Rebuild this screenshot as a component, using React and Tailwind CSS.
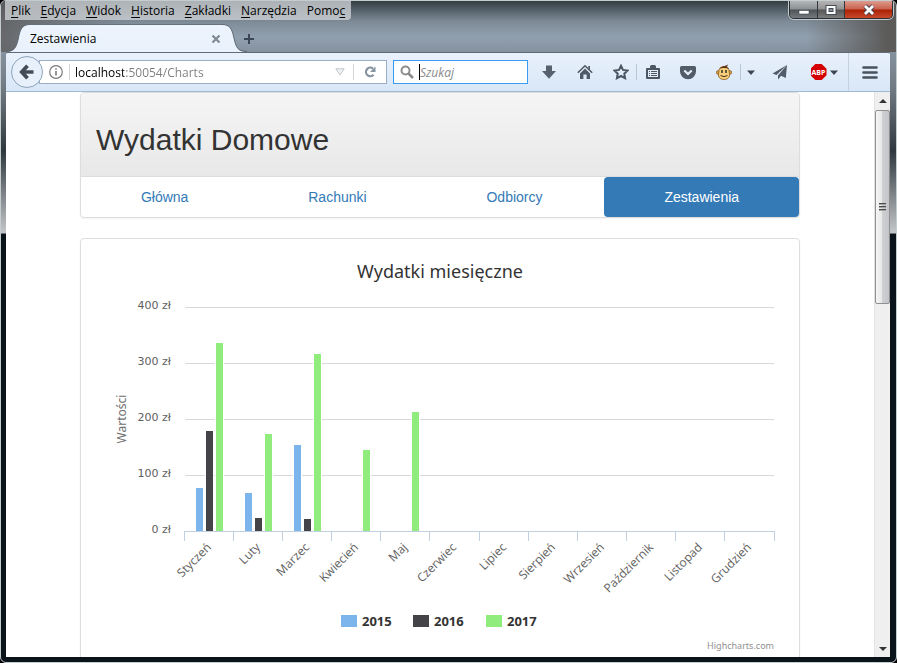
import React from "react";

const menus = [
  ["", "P", "lik"],
  ["", "E", "dycja"],
  ["", "W", "idok"],
  ["", "H", "istoria"],
  ["", "Z", "akładki"],
  ["", "N", "arzędzia"],
  ["Pomo", "c", ""],
];

const months = [
  "Styczeń", "Luty", "Marzec", "Kwiecień", "Maj", "Czerwiec",
  "Lipiec", "Sierpień", "Wrzesień", "Październik", "Listopad", "Grudzień",
];

const series = [
  { name: "2015", color: "#7cb5ec", offset: 11, values: [77, 68, 154], legendX: 245 },
  { name: "2016", color: "#434348", offset: 21, values: [179, 23, 21], legendX: 317 },
  { name: "2017", color: "#90ed7d", offset: 31, values: [336, 173, 316, 145, 213], legendX: 390 },
];

const PLOT = { left: 88, right: 678, bottom: 277, unit: 0.56 };
const tickX = (i) => Math.floor(PLOT.left + (i * (PLOT.right - PLOT.left)) / 12) + 0.5;

function WindowControls() {
  return (
    <div className="mr-[-3px] flex h-[18px] overflow-hidden rounded-b-[5px] border border-t-0 border-[#2b3035] shadow-[0_0_0_1px_#c3c9cd]">
      <button aria-label="Minimalizuj" className="flex w-7 items-center justify-center border-r border-[#33383c] bg-[linear-gradient(#b4b8ba,#8b9092_48%,#4d5356_52%,#747b80)]">
        <svg width="12" height="12"><rect x="1" y="6.500" width="10" height="3.500" fill="#fff" stroke="#444b55" strokeWidth=".6" /></svg>
      </button>
      <button aria-label="Maksymalizuj" className="flex w-[27px] items-center justify-center border-r border-[#33383c] bg-[linear-gradient(#b4b4b4,#929292_48%,#555_52%,#7d7d7d)]">
        <svg width="12" height="12"><rect x="1" y="1.500" width="10" height="9" fill="#fff" stroke="#444b55" strokeWidth="1" /><rect x="4" y="4.500" width="4" height="3" fill="#8b8f96" stroke="#444b55" strokeWidth="1" /></svg>
      </button>
      <button aria-label="Zamknij" className="flex w-[47px] items-center justify-center bg-[linear-gradient(#dd9b8f,#c9604b_48%,#ab2004_52%,#c8492a)]">
        <svg width="14" height="12" fill="none"><path d="M3 2 11 10M11 2 3 10" stroke="#4a4350" strokeWidth="4.600" /><path d="M3 2 11 10M11 2 3 10" stroke="#fff" strokeWidth="2.800" /></svg>
      </button>
    </div>
  );
}

function TitleBar() {
  return (
    <header className="ml-[-5px] mr-[-6px] bg-[linear-gradient(to_right,rgba(95,95,95,.85),rgba(110,118,126,0)_14%,rgba(110,118,126,0)_90%,rgba(90,88,86,.95)_99%)] pl-[5px] pr-[6px]">
      <div className="flex h-[19px] items-start justify-between">
        <nav className="-ml-px flex h-[19px] items-center gap-2.5 rounded-br-[4px] bg-[#ccd0d3]/80 px-1.5 text-xs text-black [text-shadow:0_0_5px_#fff,0_0_5px_#fff]">
          {menus.map(([a, key, b]) => (
            <button key={key} className="leading-4">
              {a}<span className="underline underline-offset-2">{key}</span>{b}
            </button>
          ))}
        </nav>
        <WindowControls />
      </div>
      <div className="flex h-8 items-end">
        <div className="flex h-7 items-stretch">
          <svg width="24" height="28" className="shrink-0">
            <defs><linearGradient id="tab" x1="0" y1="0" x2="0" y2="1"><stop offset="0" stopColor="#edf4fd" /><stop offset="1" stopColor="#e9f1fc" /></linearGradient></defs>
            <path d="M0 28C8 28 10 24 12 16C14 5 16 .5 24 .5V28Z" fill="url(#tab)" />
            <path d="M0 27.500C8 27 10 24 12 16C14 5 16 .5 24 .5" fill="none" stroke="#5d6872" />
          </svg>
          <div className="flex w-48 items-center justify-between border-t border-[#66727e] bg-[linear-gradient(#edf4fd,#e9f1fc)] text-xs text-black">
            <span>Zestawienia</span>
            <button aria-label="Zamknij kartę" className="mr-px">
              <svg width="10" height="10" fill="none" stroke="#7e8a96" strokeWidth="2.200"><path d="M1.500 1.500 8.500 8.500M8.500 1.500 1.500 8.500" /></svg>
            </button>
          </div>
          <svg width="25" height="28" className="shrink-0">
            <path d="M25 28C16 28 14 24 12 14C10 5 8 .5 0 .5V28Z" fill="url(#tab)" />
            <path d="M25 27.500C16 27 14 24 12 14C10 5 8 .5 0 .5" fill="none" stroke="#5d6872" />
          </svg>
        </div>
        <button aria-label="Nowa karta" className="-ml-1 mb-[7px]">
          <svg width="12" height="12" stroke="#3b4754" strokeWidth="2"><path d="M6 1V11M1 6H11" /></svg>
        </button>
      </div>
    </header>
  );
}

function Caret() {
  return <svg width="8" height="5" className="shrink-0"><path d="M0 .5H8L4 5Z" fill="#3c4651" /></svg>;
}

function Toolbar() {
  return (
    <div className="flex h-10 shrink-0 items-center rounded-t-[2px] border-b border-t border-b-[#a3b9d3] border-t-[#5f6b77] bg-[linear-gradient(#e9f1fc,#d8e7f7)] pl-[5px]">
      <button aria-label="Wstecz" className="z-10 flex size-8 shrink-0 items-center justify-center rounded-full border border-[#8fa3ba] bg-[#e7f0fb]">
        <svg width="16" height="16" fill="none" stroke="#434d58"><path d="M8.500 1.800 2.800 8 8.500 14.200" strokeWidth="3.800" /><path d="M3 8H14.500" strokeWidth="3.600" /></svg>
      </button>
      <div className="-ml-1 flex h-6 min-w-0 flex-1 items-center border border-[#9aaec4] bg-white pl-[9px]">
        <svg width="14" height="14" className="shrink-0" fill="none" stroke="#7b7b7b"><circle cx="7" cy="7" r="6.300" strokeWidth="1.200" /><path d="M7 6V10.500M7 3.200V4.800" strokeWidth="1.600" /></svg>
        <span className="ml-1.5 h-4 w-px shrink-0 bg-[#d5d5d5]" />
        <input aria-label="Adres" defaultValue="localhost:50054/Charts" className="ml-[5px] min-w-0 flex-1 bg-[linear-gradient(to_right,#000_49px,#7d7d7d_49px)] bg-clip-text pt-0.5 text-xs text-transparent outline-none" />
        <svg width="10" height="8" className="mr-2 shrink-0"><path d="M.8 .8H9.200L5 7Z" fill="#f3f3f3" stroke="#bfc5ca" /></svg>
        <span className="h-4 w-px shrink-0 bg-[#d5d5d5]" />
        <button aria-label="Odśwież" className="flex w-8 shrink-0 justify-center">
          <svg width="12" height="12" fill="none"><path d="M9.500 8.800A4.300 4.300 0 1 1 9 2.600" stroke="#8592a0" strokeWidth="2.200" /><path d="M11.500 .5V6H6Z" fill="#8592a0" /></svg>
        </button>
      </div>
      <div className="ml-1.5 flex h-6 w-[135px] shrink-0 items-center border border-[#3a9bf2] bg-white pl-1.5">
        <svg width="14" height="14" className="shrink-0" fill="none" stroke="#8d8d8d"><circle cx="5.500" cy="5.500" r="4" strokeWidth="2" /><path d="M8.500 8.500 13 13" strokeWidth="2.600" /></svg>
        <span className="ml-[5px] h-4 w-px shrink-0 bg-black" />
        <input aria-label="Szukaj" placeholder="Szukaj" className="min-w-0 flex-1 pt-0.5 text-xs outline-none placeholder:italic placeholder:text-[#8a8a8a]" />
      </div>
      <button aria-label="Pobrane" className="ml-[3px] flex w-9 shrink-0 justify-center">
        <svg width="16" height="16"><path d="M5 1.500H11V7H15L8 14.800 1 7H5Z" fill="#56616d" /></svg>
      </button>
      <button aria-label="Strona startowa" className="flex w-9 shrink-0 justify-center">
        <svg width="16" height="16"><path d="M8 4.600 13 9.400V15H9.600V10.500H6.400V15H3V9.400Z" fill="#505b67" /><path d="M.8 8.800 8 1.800 15.200 8.800" fill="none" stroke="#505b67" strokeWidth="1.600" /><path d="M11.300 2H13V6L11.300 4.500Z" fill="#505b67" /></svg>
      </button>
      <button aria-label="Dodaj zakładkę" className="ml-[3px] flex w-[30px] shrink-0 justify-center">
        <svg width="16" height="16"><path d="M8 1.800 10 5.900 14.600 6.500 11.300 9.700 12.100 14.200 8 12 3.900 14.200 4.700 9.700 1.400 6.500 6 5.900Z" fill="none" stroke="#4c5763" strokeWidth="2" /></svg>
      </button>
      <button aria-label="Zakładki" className="flex h-4 w-8 shrink-0 items-center justify-center border-l border-[#bac6d3]">
        <svg width="14" height="14"><path d="M1 3H4V1.500Q4 0 5.500 0H8.500Q10 0 10 1.500V3H13Q14 3 14 4V13Q14 14 13 14H1Q0 14 0 13V4Q0 3 1 3Z" fill="#4c5763" /><path d="M2 5H12V12H2Z" fill="#e3edf9" /><path d="M3 6.500H4M5 6.500H11M3 8.500H4M5 8.500H11M3 10.500H4M5 10.500H11" stroke="#4c5763" /></svg>
      </button>
      <button aria-label="Pocket" className="flex w-10 shrink-0 justify-center">
        <svg width="16" height="15"><path d="M1.500 1H14.500Q16 1 16 2.500V6.500A8 7.800 0 0 1 0 6.500V2.500Q0 1 1.500 1Z" fill="#515c68" /><path d="M4.300 5.500 8 9 11.700 5.500" fill="none" stroke="#e6effa" strokeWidth="2.200" /></svg>
      </button>
      <button aria-label="Greasemonkey" className="flex w-8 shrink-0 justify-center">
        <svg width="16" height="16"><circle cx="2.300" cy="8.500" r="2" fill="#d9a046" stroke="#7a4a17" strokeWidth=".6" /><circle cx="13.700" cy="8.500" r="2" fill="#d9a046" stroke="#7a4a17" strokeWidth=".6" /><path d="M8 2.500C4 2.500 3 5 3 7.500C1.500 12 3 15.500 8 15.500S14.500 12 13 7.500C13 5 12 2.500 8 2.500Z" fill="#f8cf7c" stroke="#8a5a1e" strokeWidth=".8" /><path d="M3.500 5C5 2 8 3 12 .5C11.500 2 11 2.500 10.500 3C12 3.500 12.500 4 12.700 5C10 3.500 6 4 3.500 5Z" fill="#5b3113" /><path d="M6 6V9M10 6V9" stroke="#1f2a1c" strokeWidth="1.400" /><path d="M4.500 11.500Q8 13.800 11.500 11.500" fill="none" stroke="#4a2a12" /></svg>
      </button>
      <button aria-label="Menu Greasemonkey" className="flex h-4 w-5 shrink-0 items-center justify-center border-l border-[#bac6d3]"><Caret /></button>
      <button aria-label="Wyślij" className="flex w-10 shrink-0 justify-center">
        <svg width="16" height="16"><path d="M15 1 .5 9.500 4.500 11ZM15 1 6 11.500V15.500L8.500 12.500ZM15 1 8.500 11.500 13.800 14Z" fill="#515c68" /></svg>
      </button>
      <button aria-label="Adblock Plus" className="flex w-12 shrink-0 items-center justify-center gap-[3px]">
        <span className="flex size-4 items-center justify-center bg-[#d40000] text-[7px] font-bold leading-none text-white [clip-path:polygon(30%_0,70%_0,100%_30%,100%_70%,70%_100%,30%_100%,0_70%,0_30%)]">ABP</span>
        <Caret />
      </button>
      <button aria-label="Otwórz menu" className="flex h-full w-[42px] shrink-0 items-center justify-center border-l border-[#c3d0de]">
        <svg width="16" height="13" stroke="#48525d" strokeWidth="2.600" strokeLinecap="round"><path d="M1.500 1.500H14.500M1.500 6.500H14.500M1.500 11.500H14.500" /></svg>
      </button>
    </div>
  );
}

function ScrollBar() {
  return (
    <div className="flex w-4 shrink-0 flex-col items-center border-l border-[#e3e3e3] bg-[#efefef]">
      <button aria-label="Przewiń w górę" className="flex h-[18px] w-full shrink-0 items-center justify-center"><svg width="8" height="4"><path d="M4 0 8 4H0Z" fill="#333" /></svg></button>
      <div className="flex h-[194px] w-full shrink-0 flex-col items-center justify-center rounded-[2px] border border-[#8f8f8f] bg-[linear-gradient(to_right,#f6f6f6,#e7e7e8_45%,#cfd0d4_50%,#c3c4c8)]">
        <svg width="7" height="9"><path d="M0 .5H7M0 3.500H7M0 6.500H7" stroke="#4a4a4a" /><path d="M0 1.500H7M0 4.500H7M0 7.500H7" stroke="#a5a5a5" /></svg>
      </div>
      <button aria-label="Przewiń w dół" className="mt-auto flex h-[17px] w-full shrink-0 items-center justify-center"><svg width="8" height="4"><path d="M0 0H8L4 4Z" fill="#333" /></svg></button>
    </div>
  );
}

function Chart() {
  return (
    <svg viewBox="0 0 688 400" className="block w-full font-['Noto_Sans','DejaVu_Sans',sans-serif]" role="img" aria-label="Wydatki miesięczne">
      <text x="344" y="24" textAnchor="middle" className="fill-[#333333] text-[18px]">Wydatki miesięczne</text>
      {[0, 100, 200, 300, 400].map((v) => {
        const y = PLOT.bottom - v * PLOT.unit;
        return (
          <g key={v}>
            {v > 0 && <path d={`M89 ${y + 0.5}H678`} stroke="#d8d8d8" />}
            <text x="75" y={y + 2} textAnchor="end" className="fill-[#606060] font-['DejaVu_Sans'] text-[11px]">{v} zł</text>
          </g>
        );
      })}
      <text transform="translate(30 165) rotate(-90)" textAnchor="middle" className="fill-[#707070] text-[12px]">Wartości</text>
      {series.map((s) =>
        s.values.map((v, i) => {
          const top = Math.round(PLOT.bottom - v * PLOT.unit);
          const x = Math.floor(PLOT.left + i * 49.1667) + s.offset;
          return <rect key={s.name + i} x={x + 0.5} y={top - 0.5} width="8" height={PLOT.bottom - top + 1} fill={s.color} stroke="#fff" />;
        })
      )}
      <path d="M88 277.500H679" stroke="#c0d0e0" />
      {Array.from({ length: 13 }, (_, i) => (
        <path key={i} d={`M${tickX(i)} 277V287`} stroke="#c0d0e0" />
      ))}
      {months.map((m, i) => (
        <text key={m} transform={`translate(${Math.floor(tickX(i) + 28)} 294) rotate(-45)`} textAnchor="end" className="fill-[#606060] font-['Open_Sans','Noto_Sans'] text-[12px]">{m}</text>
      ))}
      {series.map((s) => (
        <g key={s.name}>
          <rect x={s.legendX} y="361" width="16" height="12" fill={s.color} />
          <text x={s.legendX + 21} y="372" className="fill-[#333333] text-[13px] font-bold">{s.name}</text>
        </g>
      ))}
      <a href="#highcharts"><text x="678" y="395" textAnchor="end" className="fill-[#909090] text-[9px]">Highcharts.com</text></a>
    </svg>
  );
}

function Page() {
  return (
    <main className="min-w-0 flex-1 overflow-hidden bg-white font-['Liberation_Sans',Arial,sans-serif] text-sm text-[#333]">
      <div className="mx-auto max-w-[750px] px-[15px]">
        <section className="mb-5 rounded-[4px] border border-[#ddd] shadow-[0_1px_2px_rgba(0,0,0,.05)]">
          <div className="rounded-t-[3px] border-b border-[#ddd] bg-[linear-gradient(#f5f5f5,#e8e8e8)] px-[15px] pb-5 pt-[30px]">
            <h1 className="text-[30px] leading-[33px]">Wydatki Domowe</h1>
          </div>
          <nav className="flex">
            <a href="#glowna" className="flex-auto py-2.5 text-center leading-5 text-[#337ab7]">Główna</a>
            <a href="#rachunki" className="flex-auto py-2.5 text-center leading-5 text-[#337ab7]">Rachunki</a>
            <a href="#odbiorcy" className="flex-auto py-2.5 text-center leading-5 text-[#337ab7]">Odbiorcy</a>
            <a href="#zestawienia" className="ml-0.5 flex-auto rounded-[4px] bg-[#337ab7] py-2.5 text-center leading-5 text-white">Zestawienia</a>
          </nav>
        </section>
        <section className="rounded-[4px] border border-[#ddd] p-[15px] shadow-[0_1px_2px_rgba(0,0,0,.05)]">
          <Chart />
        </section>
      </div>
    </main>
  );
}

export default function App() {
  return (
    <div className="h-screen bg-black font-['Open_Sans','Noto_Sans',sans-serif]">
      <div className="flex h-full flex-col overflow-hidden rounded-[6px] border border-[#c3cccf] bg-[linear-gradient(#333e43,#7d8a96_20px,#91a0af_36px,#84919e_52px,#6f7880_90px,#2f383f_150px,#c4c7c9_232px,#0a131a_233px)] pb-[5px] pl-[5px] pr-[6px]">
        <TitleBar />
        <Toolbar />
        <div className="flex min-h-0 flex-1">
          <Page />
          <ScrollBar />
        </div>
      </div>
    </div>
  );
}
